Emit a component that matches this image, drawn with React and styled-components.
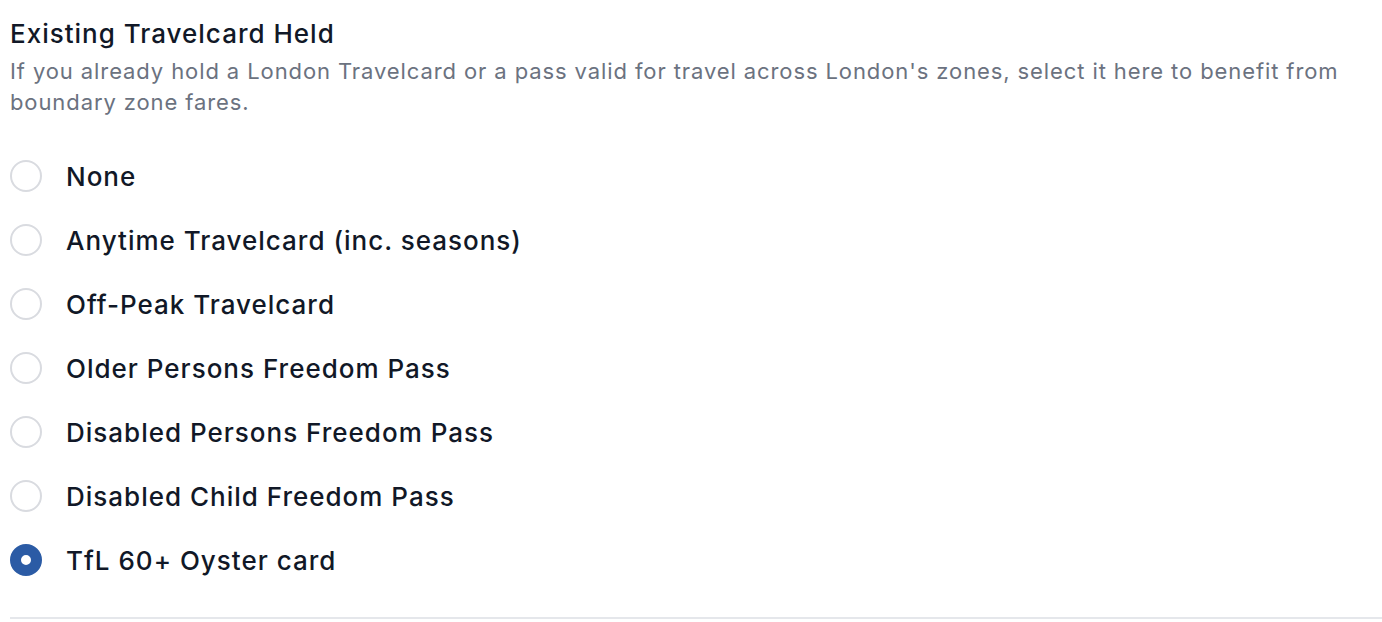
import React, { useState } from 'react';
import styled, { createGlobalStyle } from 'styled-components';

const GlobalStyle = createGlobalStyle`
  body {
    margin: 0;
    background: #fff;
    font-family: Inter, "Noto Sans", sans-serif;
  }
`;

const Section = styled.fieldset`
  margin: 0;
  padding: 17px 0 0 10px;
  border: none;
  min-width: 0;
`;

const Title = styled.h2`
  margin: 0;
  font-size: 26px;
  line-height: 34px;
  letter-spacing: 1px;
  font-weight: 500;
  color: #111827;
`;

const Hint = styled.p`
  margin: 5px 0 0;
  font-size: 22px;
  line-height: 31px;
  letter-spacing: 0.9px;
  color: #6b7280;
  max-width: 1365px;
`;

const Options = styled.div`
  display: flex;
  flex-direction: column;
  margin-top: 26px;
  padding-bottom: 25px;
  border-bottom: 2px solid #e5e7eb;
`;

const Option = styled.label`
  display: flex;
  align-items: center;
  gap: 24px;
  height: 64px;
  cursor: pointer;
  font-size: 26px;
  letter-spacing: 1px;
  font-weight: 500;
  color: #111827;
`;

const Radio = styled.span`
  box-sizing: border-box;
  width: 32px;
  height: 32px;
  border-radius: 50%;
  flex-shrink: 0;
  border: ${(p) => (p.$checked ? '11px solid #2b5ba5' : '2px solid #d9dbe0')};
  background: #fff;
`;

const options = [
    'None',
    'Anytime Travelcard (inc. seasons)',
    'Off-Peak Travelcard',
    'Older Persons Freedom Pass',
    'Disabled Persons Freedom Pass',
    'Disabled Child Freedom Pass',
    'TfL 60+ Oyster card',
];

const App = () => {
    const [selected, setSelected] = useState('TfL 60+ Oyster card');

    return (
        <>
            <GlobalStyle />
            <Section>
                <Title>Existing Travelcard Held</Title>
                <Hint>
                    If you already hold a London Travelcard or a pass valid for travel across London's zones, select it here to benefit from boundary zone fares.
                </Hint>
                <Options>
                    {options.map((o) => (
                        <Option key={o} onClick={() => setSelected(o)}>
                            <Radio $checked={selected === o} />
                            {o}
                        </Option>
                    ))}
                </Options>
            </Section>
        </>
    );
};

export default App;
